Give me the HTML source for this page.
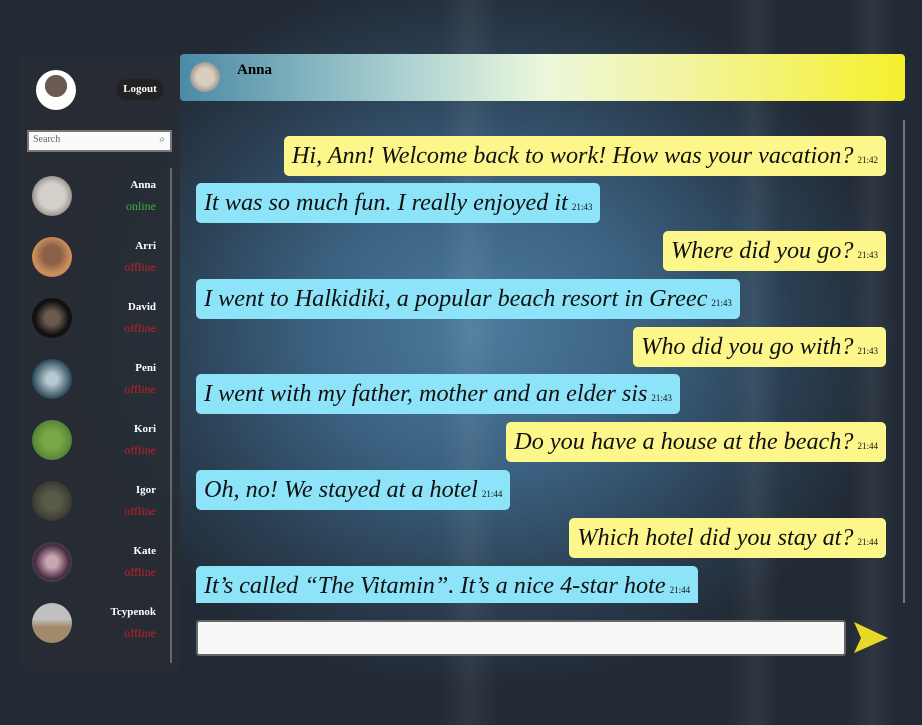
<!DOCTYPE html>
<html><head><style>
*{box-sizing:border-box;margin:0;padding:0}
html,body{width:922px;height:725px;overflow:hidden}
body{font-family:"Liberation Serif",serif;position:relative;
background:radial-gradient(ellipse 420px 360px at 480px 330px,#4d7b9c 0%,#3b6180 40%,#2a3e51 75%,#222a35 100%);}
.stripe{position:absolute;top:0;height:725px;background:linear-gradient(90deg,rgba(255,255,255,0),rgba(255,255,255,0.06),rgba(255,255,255,0))}
.side{position:absolute;left:20px;top:54px;width:160px;height:616px;background:rgba(40,45,52,0.85)}
.me{position:absolute;left:36px;top:70px;width:40px;height:40px;border-radius:50%;background:radial-gradient(circle at 50% 40%,#6a5a50 0 35%,#fff 36%)}
.logout{position:absolute;left:116px;top:79px;width:48px;height:21px;border-radius:11px;background:#222;color:#fff;font-size:11px;font-weight:bold;text-align:center;line-height:21px}
.search{position:absolute;left:27px;top:130px;width:145px;height:22px;background:#fafafa;border:2px solid #777;font-size:10px;color:#666;padding:2px 4px}
.search span{position:absolute;right:5px;top:2px;font-size:10px}
.sline{position:absolute;left:170px;top:168px;width:2px;height:495px;background:#666}
.c{position:absolute;left:32px;width:130px;height:42px}
.c .a{position:absolute;left:0;top:0;width:40px;height:40px;border-radius:50%}
.c .n{position:absolute;right:6px;top:3px;color:#fff;font-size:11px;font-weight:bold}
.c .s{position:absolute;right:6px;top:23px;color:#c0202a;font-size:12px}
.hdr{position:absolute;left:180px;top:54px;width:725px;height:47px;border-radius:4px;background:linear-gradient(90deg,#4b8aa6 0%,#a9cfd0 30%,#ebf7dd 50%,#f3f49e 70%,#f5f02c 100%)}
.hdr .a{position:absolute;left:10px;top:8px;width:30px;height:30px;border-radius:50%;background:radial-gradient(circle,#d8cdbf 40%,#6a6462)}
.hdr b{position:absolute;left:57px;top:8px;font-size:15px}
.vline{position:absolute;left:903px;top:120px;width:2px;height:483px;background:#777}
.m{position:absolute;height:40px;border-radius:5px;font-style:italic;font-size:24.2px;line-height:40px;padding:0 8px;white-space:nowrap;color:#111}
.m small{font-style:normal;font-size:9px;margin-left:4px}
.y{background:#fdf68a;right:36px}
.b{background:#8de3f8;left:196px}
.inp{position:absolute;left:196px;top:620px;width:650px;height:36px;background:#f8f8f8;border:2px solid #666;border-radius:3px}
</style></head><body>
<div class="stripe" style="left:440px;width:60px"></div>
<div class="stripe" style="left:730px;width:50px"></div>
<div class="stripe" style="left:850px;width:45px"></div>
<div class="side"></div>
<div class="me"></div>
<div class="logout">Logout</div>
<div class="search">Search<span>⌕</span></div>
<div class="sline"></div>
<div class="c" style="top:176px"><div class="a" style="background:radial-gradient(circle,#d4cfc8 45%,#555)"></div><div class="n">Anna</div><div class="s" style="color:#39b039">online</div></div>
<div class="c" style="top:237px"><div class="a" style="background:radial-gradient(circle at 50% 45%,#8a6048 30%,#c98d5a 60%)"></div><div class="n">Arri</div><div class="s">offline</div></div>
<div class="c" style="top:298px"><div class="a" style="background:radial-gradient(circle,#6a5a50 25%,#111 60%)"></div><div class="n">David</div><div class="s">offline</div></div>
<div class="c" style="top:359px"><div class="a" style="background:radial-gradient(circle,#b8c8d0 20%,#2a4a5a 70%)"></div><div class="n">Peni</div><div class="s">offline</div></div>
<div class="c" style="top:420px"><div class="a" style="background:radial-gradient(circle,#7aa848 30%,#3a6a28)"></div><div class="n">Kori</div><div class="s">offline</div></div>
<div class="c" style="top:481px"><div class="a" style="background:radial-gradient(circle,#5a5a48 30%,#222)"></div><div class="n">Igor</div><div class="s">offline</div></div>
<div class="c" style="top:542px"><div class="a" style="background:radial-gradient(circle,#c8a8b0 20%,#4a2a40 60%,#2a8a7a)"></div><div class="n">Kate</div><div class="s">offline</div></div>
<div class="c" style="top:603px"><div class="a" style="background:linear-gradient(#c0c0c0 40%,#a08a6a 60%)"></div><div class="n">Tcypenok</div><div class="s">offline</div></div>
<div class="hdr"><div class="a"></div><b>Anna</b></div>
<div class="vline"></div>
<div class="m y" style="top:136px">Hi, Ann! Welcome back to work! How was your vacation?<small>21:42</small></div>
<div class="m b" style="top:183px">It was so much fun. I really enjoyed it<small>21:43</small></div>
<div class="m y" style="top:231px">Where did you go?<small>21:43</small></div>
<div class="m b" style="top:279px">I went to Halkidiki, a popular beach resort in Greec<small>21:43</small></div>
<div class="m y" style="top:327px">Who did you go with?<small>21:43</small></div>
<div class="m b" style="top:374px">I went with my father, mother and an elder sis<small>21:43</small></div>
<div class="m y" style="top:422px">Do you have a house at the beach?<small>21:44</small></div>
<div class="m b" style="top:470px">Oh, no! We stayed at a hotel<small>21:44</small></div>
<div class="m y" style="top:518px">Which hotel did you stay at?<small>21:44</small></div>
<div class="m b" style="top:566px;height:37px;border-radius:5px 5px 0 0">It’s called “The Vitamin”. It’s a nice 4-star hote<small>21:44</small></div>
<div class="inp"></div>
<svg style="position:absolute;left:852px;top:620px" width="38" height="35" viewBox="0 0 38 35"><path d="M2 2 L36 18 L2 33 L9 18 Z" fill="#e8d828"/></svg>
</body></html>
